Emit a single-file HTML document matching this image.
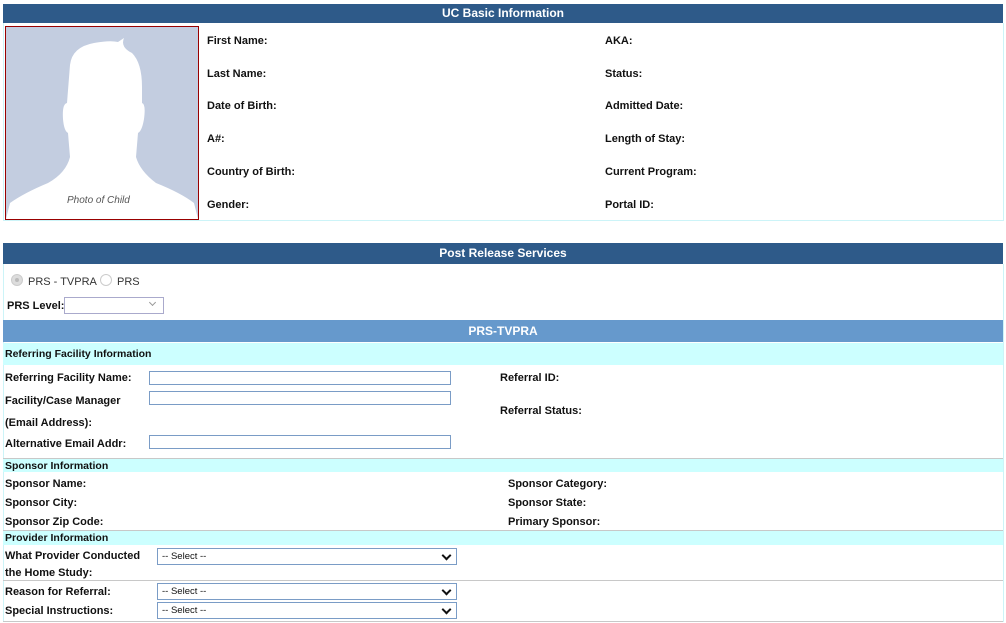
<!DOCTYPE html>
<html><head><style>
body{margin:0;width:1006px;height:623px;background:#fff;position:relative;overflow:hidden;font-family:"Liberation Sans",sans-serif;font-size:11px;color:#111}
.a{position:absolute;white-space:nowrap}
.b{font-weight:bold}
.hd{position:absolute;left:3px;width:1000px;background:#2e5a89;color:#fff;font-weight:bold;font-size:12px;text-align:center}
.cy{position:absolute;left:3px;width:1000px;background:#ccffff;font-size:10.5px;font-weight:bold;color:#111;padding-left:2px;box-sizing:border-box}
.inp{position:absolute;left:149px;width:302px;height:14px;border:1px solid #7a9cc6;box-sizing:border-box}
.sel{position:absolute;left:157px;width:300px;height:17px;border:1px solid #7a9cc6;box-sizing:border-box;font-size:9.5px;padding:2px 0 0 4px}
.sel:after{content:"";position:absolute;right:6px;top:3px;width:5px;height:5px;border-right:2px solid #111;border-bottom:2px solid #111;transform:rotate(45deg)}
.ln{position:absolute;left:3px;width:1000px;height:1px;background:#c8c8c8}
</style></head><body>
<div class="hd" style="top:4px;height:19px;line-height:19px">UC Basic Information</div>
<div style="position:absolute;left:3px;top:23px;width:999px;height:197px;border:1px solid #ccf4f8;border-top:none"></div>
<div style="position:absolute;left:5px;top:26px;width:192px;height:192px;border:1px solid #990000;background:#c3cde0;overflow:hidden">
<svg width="192" height="192" viewBox="0 0 192 192"><path d="M64 38 Q66 20 88 16 Q104 13 112 15 L118 11 Q114 20 126 26 Q136 36 136 60 L136 76 Q140 77 138 92 Q136 104 132 106 L130 130 Q134 144 150 156 Q175 166 188 176 L192 192 L0 192 L4 176 Q18 166 42 156 Q60 146 64 130 L62 106 Q58 104 57 92 Q56 77 61 76 Z" fill="#fff"/></svg>
<div class="a" style="left:61px;top:168px;font-style:italic;font-size:10px;color:#555">Photo of Child</div>
</div>
<div class="a b" style="left:207px;top:35px">First Name:</div>
<div class="a b" style="left:207px;top:68px">Last Name:</div>
<div class="a b" style="left:207px;top:100px">Date of Birth:</div>
<div class="a b" style="left:207px;top:133px">A#:</div>
<div class="a b" style="left:207px;top:166px">Country of Birth:</div>
<div class="a b" style="left:207px;top:199px">Gender:</div>
<div class="a b" style="left:605px;top:35px">AKA:</div>
<div class="a b" style="left:605px;top:68px">Status:</div>
<div class="a b" style="left:605px;top:100px">Admitted Date:</div>
<div class="a b" style="left:605px;top:133px">Length of Stay:</div>
<div class="a b" style="left:605px;top:166px">Current Program:</div>
<div class="a b" style="left:605px;top:199px">Portal ID:</div>

<div class="hd" style="top:243px;height:21px;line-height:21px">Post Release Services</div>
<div style="position:absolute;left:3px;top:264px;width:999px;height:357px;border:1px solid #ccf4f8;border-top:none"></div>
<div class="a" style="left:11px;top:274px;width:12px;height:12px;border-radius:50%;background:#ddd;border:1px solid #ccc;box-sizing:border-box"></div>
<div class="a" style="left:15px;top:278px;width:4px;height:4px;border-radius:50%;background:#bbb"></div>
<div class="a" style="left:28px;top:276px;color:#333">PRS - TVPRA</div>
<div class="a" style="left:100px;top:274px;width:12px;height:12px;border-radius:50%;border:1px solid #ccc;box-sizing:border-box"></div>
<div class="a" style="left:117px;top:276px;color:#333">PRS</div>
<div class="a b" style="left:7px;top:300px">PRS Level:</div>
<div class="a" style="left:64px;top:297px;width:100px;height:17px;border:1px solid #aac;box-sizing:border-box"></div>
<div class="a" style="left:150px;top:300px;width:4px;height:4px;border-right:1.5px solid #999;border-bottom:1.5px solid #999;transform:rotate(45deg)"></div>

<div class="a b" style="left:3px;top:320px;width:1000px;height:22px;line-height:22px;background:#6699cc;color:#fff;text-align:center;font-size:12px">PRS-TVPRA</div>
<div class="cy" style="top:343px;height:22px;line-height:22px">Referring Facility Information</div>
<div class="a b" style="left:5px;top:372px">Referring Facility Name:</div>
<div class="a b" style="left:5px;top:395px">Facility/Case Manager</div>
<div class="a b" style="left:5px;top:417px">(Email Address):</div>
<div class="a b" style="left:5px;top:438px">Alternative Email Addr:</div>
<div class="inp" style="top:371px"></div>
<div class="inp" style="top:391px"></div>
<div class="inp" style="top:435px"></div>
<div class="a b" style="left:500px;top:372px">Referral ID:</div>
<div class="a b" style="left:500px;top:405px">Referral Status:</div>

<div class="ln" style="top:458px"></div>
<div class="cy" style="top:459px;height:13px;line-height:14px">Sponsor Information</div>
<div class="a b" style="left:5px;top:478px">Sponsor Name:</div>
<div class="a b" style="left:5px;top:497px">Sponsor City:</div>
<div class="a b" style="left:5px;top:516px">Sponsor Zip Code:</div>
<div class="a b" style="left:508px;top:478px">Sponsor Category:</div>
<div class="a b" style="left:508px;top:497px">Sponsor State:</div>
<div class="a b" style="left:508px;top:516px">Primary Sponsor:</div>
<div class="ln" style="top:530px"></div>
<div class="cy" style="top:531px;height:14px;line-height:15px">Provider Information</div>
<div class="a b" style="left:5px;top:550px">What Provider Conducted</div>
<div class="a b" style="left:5px;top:567px">the Home Study:</div>
<div class="sel" style="top:548px">-- Select --</div>
<div class="ln" style="top:580px"></div>
<div class="a b" style="left:5px;top:586px">Reason for Referral:</div>
<div class="sel" style="top:583px">-- Select --</div>
<div class="a b" style="left:5px;top:605px">Special Instructions:</div>
<div class="sel" style="top:602px">-- Select --</div>
<div class="ln" style="top:621px"></div>
</body></html>
